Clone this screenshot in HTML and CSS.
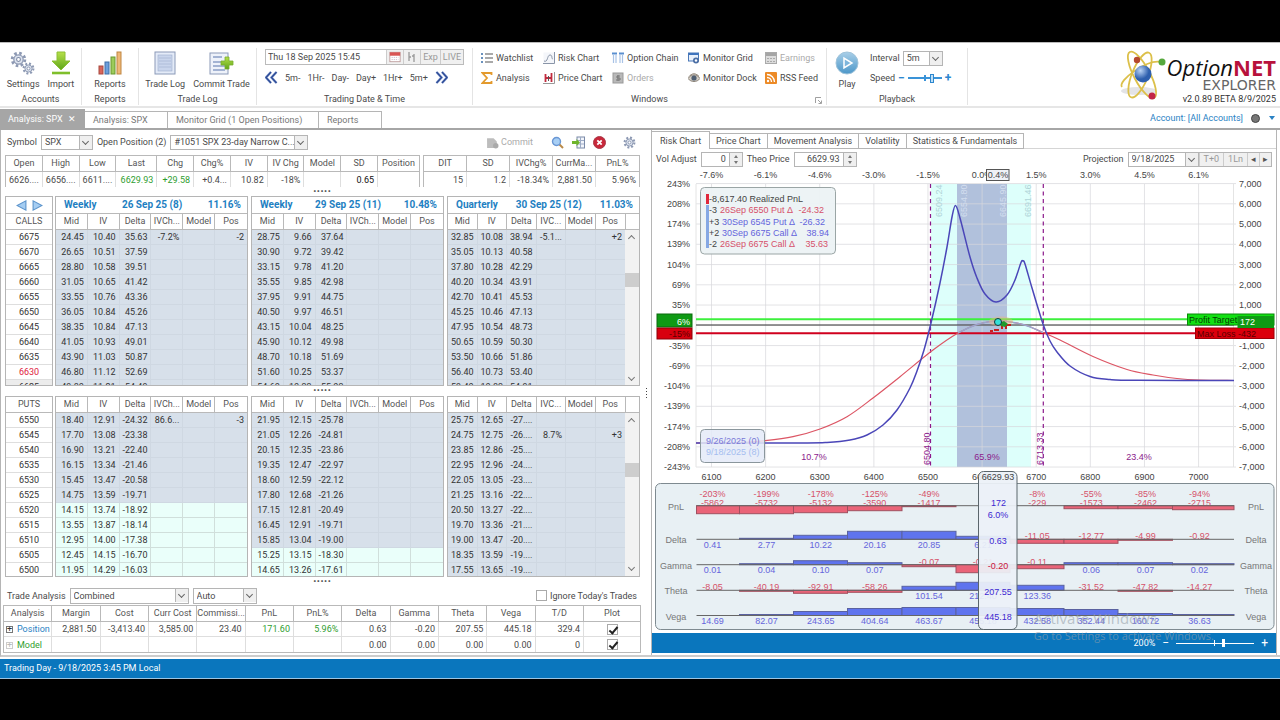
FILE: index.html
```html
<!DOCTYPE html>
<html lang="en">
<head>
  <meta charset="UTF-8">
  <title>OptionNET Explorer - Analysis: SPX</title>
  <link rel="stylesheet" href="styles.css">
</head>
<body>
  <!-- Icon sprite -->
  <svg class="sprite" width="0" height="0">
    <defs>
      <radialGradient id="ball" cx="35%" cy="30%"><stop offset="0" stop-color="#b9d3f5"/><stop offset="1" stop-color="#2d5fae"/></radialGradient>
      <linearGradient id="playFill" x1="0" y1="0" x2="0" y2="1"><stop offset="0" stop-color="#a9cfe8"/><stop offset="1" stop-color="#4c97c9"/></linearGradient>
      <linearGradient id="greenFill" x1="0" y1="0" x2="0" y2="1"><stop offset="0" stop-color="#b6e04a"/><stop offset="1" stop-color="#5ea51a"/></linearGradient>
    </defs>
    <symbol id="gear" viewBox="0 0 16 16">
      <circle cx="8" cy="8" r="6" fill="none" stroke="#8d99b3" stroke-width="2.6" stroke-dasharray="2.4 2.3"/>
      <circle cx="8" cy="8" r="4.4" fill="#dde3ee" stroke="#8d99b3" stroke-width="1.2"/>
      <circle cx="8" cy="8" r="1.8" fill="#fff" stroke="#7d8aa6"/>
    </symbol>
    <symbol id="import" viewBox="0 0 24 24">
      <path d="M8 1h8v9h5l-9 9-9-9h5z" fill="url(#greenFill)" stroke="#8cbf35"/>
      <path d="M3 22h18" stroke="#7fbf2b" stroke-width="2.6"/>
    </symbol>
    <symbol id="bars" viewBox="0 0 24 24">
      <rect x="1" y="15" width="4" height="8" fill="#d9655b" stroke="#a8483f"/>
      <rect x="7" y="11" width="4" height="12" fill="#6d9fdc" stroke="#3f6ea8"/>
      <rect x="13" y="6" width="4" height="17" fill="#9ccb5a" stroke="#6a9a31"/>
      <rect x="19" y="1" width="4" height="22" fill="#efb876" stroke="#bf8642"/>
    </symbol>
    <symbol id="log" viewBox="0 0 24 24">
      <rect x="2" y="1" width="20" height="22" fill="#e4ebf8" stroke="#8b9ab8"/>
      <rect x="5" y="4" width="14" height="16" fill="#c9d5ec" stroke="#9dadcc" stroke-width=".6"/>
      <path d="M6 7h12M6 10h12M6 13h12M6 16h12" stroke="#a9b8d6" stroke-width=".8"/>
    </symbol>
    <symbol id="commit" viewBox="0 0 26 24">
      <rect x="2" y="2" width="18" height="21" fill="#eef2fa" stroke="#8b9ab8"/>
      <path d="M5 6h9M5 11h9M5 15h12M5 19h12" stroke="#a3b3d3" stroke-width="2"/>
      <path d="M17 6h4v4h4v4h-4v4h-4v-4h-4v-4h4z" fill="url(#greenFill)" stroke="#7aad2d" stroke-width=".8"/>
    </symbol>
    <symbol id="calendar" viewBox="0 0 14 14">
      <rect x="1" y="1.500" width="12" height="11" fill="#fff" stroke="#b99"/>
      <rect x="1" y="1.500" width="12" height="4" fill="#d95454"/>
      <path d="M3 7.500h8M3 10h8" stroke="#c9b7c9" stroke-dasharray="1.500 1"/>
    </symbol>
    <symbol id="candles" viewBox="0 0 12 12"><path d="M3 1v9M3 6h2M8 3v8M6 5h2" stroke="#999" stroke-width="1.300" fill="none"/></symbol>
    <symbol id="back" viewBox="0 0 13 13">
      <path d="M6 1 1 6.500 6 12M11.500 1l-5 5.500 5 5.500" fill="none" stroke="#8aa0d4" stroke-width="2.600"/>
      <path d="M6 1 1 6.500 6 12M11.500 1l-5 5.500 5 5.500" fill="none" stroke="#2c4a94" stroke-width="1.300"/>
    </symbol>
    <symbol id="list" viewBox="0 0 12 12"><path d="M4 2h8M4 6h8M4 10h8" stroke="#555" stroke-width="1.200"/><path d="M0 2h2M0 6h2M0 10h2" stroke="#3a6ea8" stroke-width="1.600"/></symbol>
    <symbol id="sigma" viewBox="0 0 12 12"><path d="M10.500 3V1H1.500l4.500 5-4.500 5h9V9" fill="none" stroke="#e39a2d" stroke-width="1.800"/></symbol>
    <symbol id="curve" viewBox="0 0 12 12"><rect x=".5" y=".5" width="11" height="11" fill="#f4f6fa"/><path d="M1 9c4 2 3-6 6-6s1 4 3 4M11.500 0v11.500H0" fill="none" stroke="#8a95a8"/></symbol>
    <symbol id="price" viewBox="0 0 12 12"><path d="M11.500 0v11.500H0" stroke="#999" fill="none"/><path d="M2.500 2v8M8.500 1v9M3 6h5" stroke="#c22b3e" stroke-width="1.800"/><path d="M5.500 4v5" stroke="#555"/></symbol>
    <symbol id="chain" viewBox="0 0 12 12"><path d="M0 1.500h5M7 1.500h5" stroke="#5a8fd0" stroke-width="2"/><path d="M1.500 3v8M4 3v8M8 3v8M10.500 3v8" stroke="#a9c3e6" stroke-width="1.200"/></symbol>
    <symbol id="orders" viewBox="0 0 12 12"><rect x="1" y="1" width="10" height="10" fill="#b9b9b9" stroke="#999"/><path d="M8 4H5v2h3v2H4M6 3v6" stroke="#777" fill="none"/></symbol>
    <symbol id="mgrid" viewBox="0 0 12 12"><rect x=".5" y="1" width="10" height="8" fill="#e8f0fb" stroke="#4a78b8"/><path d="M.5 2h10" stroke="#3f74bd" stroke-width="2"/><circle cx="8" cy="8.500" r="3" fill="#4c6fa5"/><circle cx="8" cy="8.500" r="1.200" fill="#fff"/></symbol>
    <symbol id="eye" viewBox="0 0 12 12"><path d="M0 6.500C3 2 9 2 12 6.500 9 10.500 3 10.500 0 6.500z" fill="#d5cfc6" stroke="#8b8379"/><circle cx="6" cy="6" r="2.600" fill="#4f5f72"/><path d="M1 4.500C4 1 8 1 11 4.500" fill="none" stroke="#7a6d5c"/></symbol>
    <symbol id="earn" viewBox="0 0 12 12"><rect x=".5" y=".5" width="11" height="11" fill="#dcdcdc" stroke="#aaa"/><path d="M1 2.500h10" stroke="#a5a5a5" stroke-width="3"/><path d="M2 6.500h8M2 9.500h8" stroke="#aaa" stroke-dasharray="2 1"/></symbol>
    <symbol id="rss" viewBox="0 0 12 12"><rect width="12" height="12" rx="1" fill="#ec8a26"/><circle cx="3" cy="9" r="1.200" fill="#fff"/><path d="M2 5.500a4.500 4.500 0 0 1 4.500 4.500M2 2.500A7.500 7.500 0 0 1 9.500 10" stroke="#fff" stroke-width="1.300" fill="none"/></symbol>
    <symbol id="play" viewBox="0 0 24 24"><circle cx="12" cy="12" r="11" fill="url(#playFill)" stroke="#9fc3da"/><path d="M9 7v10l8-5z" fill="#7db6dc" stroke="#fff" stroke-width="1.500"/></symbol>
    <symbol id="tray" viewBox="0 0 12 12"><path d="M1 2h6l3 3v6H1z" fill="#bdbdbd"/><circle cx="9" cy="9" r="2.500" fill="#aaa"/></symbol>
    <symbol id="find" viewBox="0 0 13 13"><path d="m8 8 4 4" stroke="#b98a4a" stroke-width="2"/><circle cx="5.500" cy="5.500" r="4" fill="#a8cff5" stroke="#6a97d4" stroke-width="1.400"/></symbol>
    <symbol id="export" viewBox="0 0 13 13"><rect x="5" y="1" width="7.500" height="11" fill="#f2f5fb" stroke="#7b8aa8"/><path d="M5 4.500h7M5 8h7M8.500 1v11" stroke="#9dabc6"/><path d="M4.500 3v2H0v3h4.500v2L8 6.500z" fill="#6fb52c"/></symbol>
    <symbol id="close" viewBox="0 0 13 13"><circle cx="6.500" cy="6.500" r="6" fill="#c8273a" stroke="#a83a48"/><path d="m4.300 4.300 4.400 4.400m0-4.400L4.300 8.700" stroke="#fff" stroke-width="1.800"/></symbol>
    <symbol id="tri" viewBox="0 0 10 10"><path d="M9 .8v8.400L1 5z" fill="#a5cdf2" stroke="#5b93cb"/></symbol>
  </svg>

  <div class="app">
    <!-- Ribbon -->
    <header class="ribbon">
      <section class="group accounts">
        <div class="group-body">
          <button class="big"><span class="gears"><svg><use href="#gear"/></svg><svg class="small-gear"><use href="#gear"/></svg></span>Settings</button>
          <button class="big"><svg><use href="#import"/></svg>Import</button>
        </div>
        <h2>Accounts</h2>
      </section>
      <section class="group reports">
        <div class="group-body"><button class="big"><svg><use href="#bars"/></svg>Reports</button></div>
        <h2>Reports</h2>
      </section>
      <section class="group tradelog">
        <div class="group-body">
          <button class="big"><svg><use href="#log"/></svg>Trade Log</button>
          <button class="big"><svg><use href="#commit"/></svg>Commit Trade</button>
        </div>
        <h2>Trade Log</h2>
      </section>
      <section class="group datetime">
        <div class="group-body stack">
          <div class="date-row">
            <input type="text" aria-label="Trading date" value="Thu 18 Sep 2025 15:45">
            <button aria-label="Calendar"><svg><use href="#calendar"/></svg></button>
            <button aria-label="Candles"><svg><use href="#candles"/></svg></button>
            <button>Exp</button>
            <button>LIVE</button>
          </div>
          <div class="step-row">
            <button aria-label="Back"><svg><use href="#back"/></svg></button>
            <button>5m-</button><button>1Hr-</button><button>Day-</button>
            <button>Day+</button><button>1Hr+</button><button>5m+</button>
            <button aria-label="Forward"><svg class="flip"><use href="#back"/></svg></button>
          </div>
        </div>
        <h2>Trading Date &amp; Time</h2>
      </section>
      <section class="group windows">
        <div class="group-body window-grid">
          <button><svg><use href="#list"/></svg>Watchlist</button>
          <button><svg><use href="#curve"/></svg>Risk Chart</button>
          <button><svg><use href="#chain"/></svg>Option Chain</button>
          <button><svg><use href="#mgrid"/></svg>Monitor Grid</button>
          <button class="off"><svg><use href="#earn"/></svg>Earnings</button>
          <button><svg><use href="#sigma"/></svg>Analysis</button>
          <button><svg><use href="#price"/></svg>Price Chart</button>
          <button class="off"><svg><use href="#orders"/></svg>Orders</button>
          <button><svg><use href="#eye"/></svg>Monitor Dock</button>
          <button><svg><use href="#rss"/></svg>RSS Feed</button>
        </div>
        <h2>Windows</h2>
        <svg class="launcher" viewBox="0 0 7 7"><path d="M.5 6V.5H6M3 3l3 3M6.500 3.500v3h-3" fill="none" stroke="#888" stroke-width=".8"/></svg>
      </section>
      <section class="group playback">
        <div class="group-body">
          <button class="big"><svg><use href="#play"/></svg>Play</button>
          <div class="play-opts">
            <div class="play-row">
              <label for="interval">Interval</label>
              <span class="combo interval"><select id="interval"><option>5m</option></select></span>
            </div>
            <div class="play-row">
              <label for="speed">Speed</label>
              <span class="blue-sign">&#8722;</span>
              <input id="speed" class="speed" type="range" min="0" max="100" value="75">
              <span class="blue-sign">+</span>
            </div>
          </div>
        </div>
        <h2>Playback</h2>
      </section>
      <div class="brand">
        <svg class="atom" viewBox="0 0 48 54">
          <ellipse cx="20" cy="42" rx="18" ry="4" fill="#e3e3e6"/>
          <g fill="none" stroke="#dcc04a" stroke-width="1.800">
            <ellipse cx="23" cy="26" rx="8" ry="26" transform="rotate(-28 23 26)"/>
            <ellipse cx="21" cy="26" rx="8" ry="24" transform="rotate(22 21 26)"/>
            <path d="M3 38C-2 32 28 10 42 13"/>
          </g>
          <circle cx="24" cy="25" r="8.500" fill="url(#ball)"/>
          <circle cx="18" cy="11" r="3.200" fill="#b5482f"/>
          <circle cx="43" cy="13" r="3.500" fill="#55a83c"/>
          <circle cx="33" cy="47" r="3.500" fill="#c22448"/>
        </svg>
        <div class="brand-text">
          <div class="brand-name"><i>Option</i><b>NET</b></div>
          <div class="brand-sub">EXPLORER</div>
          <div class="version">v2.0.89 BETA 8/9/2025</div>
        </div>
      </div>
    </header>

    <!-- Document tabs -->
    <nav class="doc-tabs">
      <button class="doc-tab active">Analysis: SPX <span class="tab-x">&#10005;</span></button>
      <button class="doc-tab">Analysis: SPX</button>
      <button class="doc-tab monitor">Monitor Grid (1 Open Positions)</button>
      <button class="doc-tab last">Reports</button>
      <a class="account" href="#">Account: [All Accounts]</a>
      <span class="account-dot"></span>
      <span class="account-arrow"></span>
    </nav>

    <main class="main">
      <!-- Left: option chain -->
      <div class="left">
        <div class="bar">
          <label for="symbol">Symbol</label>
          <span class="combo symbol"><select id="symbol"><option>SPX</option></select></span>
          <label for="position">Open Position (2)</label>
          <span class="combo position"><select id="position"><option>#1051 SPX 23-day Narrow C...</option></select></span>
          <button class="tool off push"><svg><use href="#tray"/></svg>Commit</button>
          <button class="tool zoomer" aria-label="Find"><svg><use href="#find"/></svg></button>
          <button class="tool" aria-label="Export"><svg><use href="#export"/></svg></button>
          <button class="tool" aria-label="Close position"><svg><use href="#close"/></svg></button>
          <button class="tool options" aria-label="Options"><svg><use href="#gear"/></svg></button>
        </div>

        <div class="quotes">
          <table class="grid quote">
            <thead><tr><th>Open</th><th>High</th><th>Low</th><th class="wide">Last</th><th>Chg</th><th>Chg%</th><th>IV</th><th>IV Chg</th><th>Model</th><th>SD</th><th class="wide">Position</th></tr></thead>
            <tbody><tr><td>6626....</td><td>6656....</td><td>6611....</td><td class="up">6629.93</td><td class="up">+29.58</td><td>+0.4...</td><td>10.82</td><td>-18%</td><td></td><td class="dark">0.65</td><td></td></tr></tbody>
          </table>
          <table class="grid position-quote">
            <thead><tr><th>DIT</th><th>SD</th><th>IVChg%</th><th>CurrMa...</th><th>PnL%</th></tr></thead>
            <tbody><tr><td>15</td><td>1.2</td><td>-18.34%</td><td>2,881.50</td><td>5.96%</td></tr></tbody>
          </table>
        </div>
        <div class="splitter">&middot;&middot;&middot;&middot;&middot;</div>

        <div class="chain calls" id="calls"></div>
        <div class="splitter">&middot;&middot;&middot;&middot;&middot;</div>
        <div class="chain puts" id="puts"></div>
        <div class="splitter">&middot;&middot;&middot;&middot;&middot;</div>

        <div class="bar trade-bar">
          <label for="mode">Trade Analysis</label>
          <span class="combo mode"><select id="mode"><option>Combined</option></select></span>
          <span class="combo auto"><select aria-label="Refresh"><option>Auto</option></select></span>
          <label class="push check-label"><input type="checkbox"> Ignore Today's Trades</label>
        </div>
        <table class="grid analysis">
          <thead><tr><th>Analysis</th><th>Margin</th><th>Cost</th><th>Curr Cost</th><th>Commissi...</th><th>PnL</th><th>PnL%</th><th>Delta</th><th>Gamma</th><th>Theta</th><th>Vega</th><th>T/D</th><th class="plot">Plot</th></tr></thead>
          <tbody>
            <tr><td class="name pos"><i>+</i>Position</td><td>2,881.50</td><td>-3,413.40</td><td>3,585.00</td><td>23.40</td><td class="up">171.60</td><td class="up">5.96%</td><td>0.63</td><td>-0.20</td><td>207.55</td><td>445.18</td><td>329.4</td><td class="plot"><input type="checkbox" aria-label="Plot position" checked></td></tr>
            <tr><td class="name model"><i>+</i>Model</td><td></td><td></td><td></td><td></td><td></td><td></td><td>0.00</td><td>0.00</td><td>0.00</td><td>0.00</td><td>0</td><td class="plot"><input type="checkbox" aria-label="Plot model" checked></td></tr>
          </tbody>
        </table>
      </div>

      <div class="v-splitter"><span></span><span></span><span></span><span></span></div>

      <!-- Right: risk chart -->
      <div class="right">
        <nav class="chart-tabs">
          <button class="active">Risk Chart</button>
          <button>Price Chart</button>
          <button>Movement Analysis</button>
          <button>Volatility</button>
          <button>Statistics &amp; Fundamentals</button>
        </nav>
        <div class="chart-bar">
          <label for="vol">Vol Adjust</label>
          <span class="spin vol"><input id="vol" type="text" value="0"><span class="arrows"></span></span>
          <label for="theo">Theo Price</label>
          <span class="spin theo"><input id="theo" type="text" value="6629.93"><span class="arrows"></span></span>
          <label class="push" for="proj">Projection</label>
          <span class="combo proj"><select id="proj"><option>9/18/2025</option></select></span>
          <span class="proj-buttons"><button>T+0</button><button>1Ln</button><button aria-label="Previous">&#9666;</button><button aria-label="Next">&#9656;</button></span>
        </div>
        <svg class="risk" id="risk" viewBox="652 168 624 465"></svg>
        <div class="zoom-bar">
          <label for="zoom">200%</label>
          <span>&#8722;</span>
          <input id="zoom" type="range" min="0" max="100" value="61">
          <span>+</span>
        </div>
        <div class="watermark">
          <div class="big-mark">Activate Windows</div>
          <div>Go to Settings to activate Windows.</div>
        </div>
      </div>
    </main>

    <footer class="status">Trading Day - 9/18/2025 3:45 PM Local</footer>
  </div>

  <script src="app.js"></script>
</body>
</html>
```
FILE: styles.css
```css
* {
  box-sizing: border-box;
}

body {
  margin: 0;
  padding: 42px 0 0;
  background: #000;
  color: #4a4a4a;
  font-family: Roboto, "Liberation Sans", sans-serif;
  font-size: 9px;
  line-height: 12px;
}

button, input, select {
  font: inherit;
  color: inherit;
  margin: 0;
  padding: 0;
}

button {
  background: none;
  border: none;
  white-space: nowrap;
}

.sprite {
  position: absolute;
}

.app {
  background: #fff;
  border-top: 1px solid #bbb;
  border-bottom: 1px solid #9cc4e2;
}

.off, button.off {
  color: #aaa;
}

.push {
  margin-left: auto;
}

/* Ribbon */
.ribbon {
  display: flex;
  padding-top: 5px;
  height: 65px;
  border-bottom: 2px solid #e6e6e6;
}

.group {
  position: relative;
  display: flex;
  flex-direction: column;
  flex-shrink: 0;
  height: 57px;
  border-right: 1px solid #e4e4e4;
}

.group h2 {
  margin: 0;
  font-size: 9px;
  font-weight: normal;
  line-height: 12px;
  text-align: center;
}

.group-body {
  display: flex;
  justify-content: center;
  height: 47px;
}

.accounts { width: 82px; }
.reports { width: 57px; }
.tradelog { width: 118px; }
.datetime { width: 216px; }
.windows { width: 354px; }
.playback { width: 141px; }

.big {
  display: flex;
  flex-direction: column;
  align-items: center;
  gap: 3px;
  padding: 3px 4px 0;
}

.big > svg, .gears {
  width: 26px;
  height: 24px;
}

.gears {
  position: relative;
}

.gears svg {
  position: absolute;
  left: 0;
  top: 0;
  width: 17px;
  height: 17px;
}

.gears .small-gear {
  left: 12px;
  top: 11px;
  width: 13px;
  height: 13px;
}

.stack {
  flex-direction: column;
  justify-content: flex-start;
  padding: 1px 8px 0;
  gap: 6px;
}

.date-row {
  display: flex;
  height: 16px;
  border: 1px solid #bbb;
}

.date-row input {
  flex: 1;
  min-width: 0;
  border: none;
  padding-left: 2px;
}

.date-row button {
  display: flex;
  align-items: center;
  padding: 0 2px;
  border-left: 1px solid #ccc;
  background: #f0f0f0;
  color: #999;
}

.date-row svg {
  width: 12px;
  height: 12px;
}

.step-row {
  display: flex;
  align-items: center;
  gap: 7px;
}

.step-row svg {
  display: block;
  width: 13px;
  height: 13px;
}

.flip {
  transform: scaleX(-1);
}

.window-grid {
  display: grid;
  grid-template-columns: 62px 69px 76px 77px 60px;
  grid-template-rows: 20px 20px;
  justify-content: start;
  padding-left: 8px;
}

.window-grid button {
  display: flex;
  align-items: center;
  gap: 3px;
}

.window-grid svg {
  width: 12px;
  height: 12px;
}

.launcher {
  position: absolute;
  right: 4px;
  bottom: 1px;
  width: 7px;
  height: 7px;
}

.playback .group-body {
  justify-content: flex-start;
  padding-left: 3px;
}

.play-opts {
  padding-left: 6px;
}

.play-row {
  display: flex;
  align-items: center;
  gap: 3px;
  height: 20px;
}

.blue-sign {
  color: #2d87cf;
  font-size: 12px;
  font-weight: bold;
}

input[type="range"] {
  appearance: none;
  height: 10px;
  background: linear-gradient(#3a93d8, #3a93d8) center / 100% 2px no-repeat;
}

input[type="range"]::-webkit-slider-thumb {
  appearance: none;
  width: 4px;
  height: 9px;
  background: #bfe0f7;
  border: 1px solid #2d87cf;
}

input.speed {
  width: 34px;
  background:
    linear-gradient(#3a93d8, #3a93d8) 16px center / 2px 6px no-repeat,
    linear-gradient(#3a93d8, #3a93d8) center / 100% 2px no-repeat;
}

/* Brand */
.brand {
  display: flex;
  margin-left: auto;
  padding-right: 4px;
}

.atom {
  width: 48px;
  height: 54px;
  margin-top: 1px;
}

.brand-text {
  text-align: right;
  color: #333;
}

.brand-name {
  font-family: "Open Sans", "Noto Sans", sans-serif;
  font-size: 22px;
  line-height: 24px;
  padding-top: 7px;
  color: #111;
}

.brand-name b {
  color: #b8123c;
}

.brand-sub {
  font-family: "DejaVu Sans", sans-serif;
  font-size: 14px;
  line-height: 12px;
  color: #666;
}

.version {
  line-height: 16px;
}

/* Document tabs */
.doc-tabs {
  display: flex;
  align-items: flex-end;
  height: 22px;
  border-bottom: 2px solid #a6a6a6;
  color: #777;
}

.doc-tab {
  width: 83px;
  height: 17px;
  padding: 0 8px;
  border: 1px solid #b5b5b5;
  border-width: 1px 1px 0 0;
  line-height: 14px;
  text-align: left;
}

.doc-tab.active {
  display: flex;
  justify-content: space-between;
  align-items: center;
  width: 85px;
  height: 19px;
  background: #a6a6a6;
  border-color: #a6a6a6;
  color: #fff;
}

.doc-tab.monitor {
  width: 151px;
}

.doc-tab.last {
  width: 63px;
}

.account {
  margin-left: auto;
  padding-bottom: 4px;
  color: #2a82c4;
  text-decoration: none;
}

.account-dot {
  width: 9px;
  height: 9px;
  margin: 0 9px 5px 8px;
  border: 1px solid #444;
  border-radius: 50%;
  background: #777;
}

.account-arrow {
  margin: 0 5px 8px 0;
  border: 3px solid transparent;
  border-top: 4px solid #2a82c4;
  border-bottom: none;
}

/* Main */
.main {
  display: grid;
  grid-template-columns: 638fr 10px 626fr;
  padding: 0 3px 0 2px;
  border-left: 1px solid #b5b5b5;
  border-bottom: 2px solid #ccc;
}

.left {
  min-width: 0;
  padding-bottom: 2px;
}

.bar {
  display: flex;
  align-items: center;
  gap: 4px;
  height: 24px;
  padding: 0 4px;
}

.combo {
  position: relative;
  display: inline-flex;
  height: 15px;
  border: 1px solid #b5b5b5;
}

.combo select {
  flex: 1;
  min-width: 0;
  appearance: none;
  border: none;
  border-radius: 0;
  background: #fff;
  padding: 0 3px;
}

.combo::before {
  content: "";
  position: absolute;
  right: 0;
  top: 0;
  width: 12px;
  height: 13px;
  border-left: 1px solid #b5b5b5;
  background: #efefef;
  pointer-events: none;
}

.combo::after {
  content: "";
  position: absolute;
  right: 4px;
  top: 3px;
  width: 4px;
  height: 4px;
  border: solid #666;
  border-width: 0 1px 1px 0;
  transform: rotate(45deg);
  pointer-events: none;
}

.combo.interval { width: 40px; }
.combo.symbol { width: 52px; }
.combo.position { width: 138px; }
.combo.mode { width: 119px; }
.combo.auto { width: 64px; }
.combo.proj { width: 71px; }

.tool {
  display: flex;
  align-items: center;
  gap: 2px;
  margin-left: 4px;
}

.tool.push {
  margin-left: auto;
}

.tool svg {
  width: 13px;
  height: 13px;
}

.tool.zoomer {
  margin-left: 14px;
}

.tool.options {
  margin: 0 1px 0 13px;
}

/* Grids */
.grid {
  width: 100%;
  border-collapse: separate;
  border-spacing: 0;
  table-layout: fixed;
}

.grid th {
  height: 16px;
  padding: 0;
  border: 1px solid #b9b9b9;
  border-width: 0 1px 1px 0;
  color: #555;
  font-weight: normal;
  line-height: 15px;
  text-align: center;
  white-space: nowrap;
  overflow: hidden;
}

.grid td {
  height: 15px;
  padding: 0 3px 0 0;
  border: 1px solid #dedede;
  border-width: 0 1px 1px 0;
  line-height: 14px;
  text-align: right;
  white-space: nowrap;
  overflow: hidden;
}

.grid th:last-child, .grid td:last-child {
  border-right: none;
}

.up {
  color: #2f9e2f;
}

.dark {
  color: #111;
}

.quotes {
  display: flex;
  gap: 3px;
  height: 33px;
  padding: 1px 1px 0 2px;
}

.quote, .position-quote {
  border: 1px solid #b9b9b9;
  border-bottom: none;
}

.quotes .grid td {
  border-bottom: none;
}

.quotes .wide {
  width: 41px;
}

.quote {
  flex: 415;
}

.position-quote {
  flex: 216;
}

.splitter {
  height: 9px;
  color: #555;
  font-size: 12px;
  font-weight: bold;
  line-height: 10px;
  text-align: center;
}

.chain {
  display: flex;
  gap: 3px;
  padding: 0 1px 0 2px;
}

.calls { height: 190px; }
.puts { height: 181px; margin-top: 1px; }

.expiry {
  flex: 1;
  min-width: 0;
  overflow: hidden;
  border: 1px solid #b5b5b5;
  color: #333;
}

.expiry.strikes {
  flex: 0 0 48px;
  margin-right: -1px;
}

.strikes td {
  text-align: center;
  padding: 0;
}

.strikes .at-money {
  color: #e0203c;
}

.strikes .beyond {
  background: #ececec;
}

.expiry-title {
  display: flex;
  justify-content: space-between;
  align-items: center;
  height: 17px;
  padding: 0 6px 0 8px;
  border-bottom: 1px solid #b9b9b9;
  color: #1e7fc2;
  font-size: 10px;
  font-weight: bold;
}

.strikes .expiry-title {
  justify-content: center;
  gap: 5px;
  padding: 0;
}

.expiry-title svg {
  width: 11px;
  height: 11px;
}

.expiry-body {
  display: flex;
}

.grid .near td {
  background: #d7e0ea;
  border-color: #cfd8e2;
}

.grid .far td {
  background: #eafffa;
  border-color: #d0dfdb;
}

.scroll {
  flex: 0 0 14px;
  display: flex;
  flex-direction: column;
  background: #f2f2f2;
}

.scroll-head {
  height: 16px;
  border: 1px solid #b9b9b9;
  border-width: 0 0 1px 1px;
  background: #fff;
}

.scroll .chev {
  width: 5px;
  height: 5px;
  margin: 6px 4px 3px;
  border: solid #777;
  border-width: 1px 0 0 1px;
  transform: rotate(45deg);
}

.scroll .chev.down {
  margin: 0 4px 6px;
  transform: rotate(225deg);
}

.thumb {
  height: 14px;
  margin: 29px 0 auto;
  background: #cdcdcd;
}

.puts .thumb {
  margin-top: 36px;
}

.calls .expiry-body { height: 172px; }
.puts .expiry-body { height: 179px; }

.trade-bar {
  height: 19px;
}

.trade-bar .combo {
  height: 16px;
}

.check-label {
  display: flex;
  align-items: center;
  gap: 3px;
}

input[type="checkbox"] {
  appearance: none;
  position: relative;
  width: 11px;
  height: 11px;
  border: 1px solid #aaa;
  background: #fff;
}

input[type="checkbox"]:checked::after {
  content: "";
  position: absolute;
  left: 3px;
  top: 0;
  width: 3px;
  height: 7px;
  border: solid #222;
  border-width: 0 2px 2px 0;
  transform: rotate(40deg);
}

.analysis {
  border: 1px solid #b9b9b9;
}

.analysis tbody tr:last-child td {
  border-bottom: none;
}

.analysis .plot {
  width: 56px;
  padding: 0;
  text-align: center;
}

.analysis .plot input {
  display: block;
  margin: 0 auto;
}

.analysis .name {
  text-align: left;
  padding: 0 0 0 2px;
}

.name i {
  display: inline-block;
  width: 7px;
  height: 7px;
  margin-right: 4px;
  border: 1px solid #777;
  font-style: normal;
  line-height: 5px;
  text-align: center;
}

.name.pos { color: #2a82c4; }
.name.model { color: #2f9e2f; }
.name.pos i { color: #333; }
.name.model i { color: #bbb; border-color: #ccc; }

.v-splitter {
  display: flex;
  flex-direction: column;
  align-items: center;
  justify-content: center;
  gap: 2px;
}

.v-splitter span {
  width: 1px;
  height: 1px;
  background: #444;
}

/* Risk chart */
.right {
  position: relative;
  min-width: 0;
  border: 1px solid #b5b5b5;
  border-width: 0 1px;
}

.chart-tabs {
  display: flex;
  align-items: flex-end;
  height: 19px;
  padding-top: 1px;
}

.chart-tabs button {
  height: 16px;
  padding: 0 6px;
  border: 1px solid #b5b5b5;
  border-left: none;
}

.chart-tabs button.active {
  height: 18px;
  padding: 0 8px;
  border-bottom: none;
}

.chart-tabs::after {
  content: "";
  flex: 1;
  border-bottom: 1px solid #d5d5d5;
}

.chart-bar {
  display: flex;
  align-items: center;
  gap: 4px;
  height: 19px;
  padding: 1px 4px 0;
}

.spin {
  display: inline-flex;
  height: 15px;
  border: 1px solid #b5b5b5;
}

.spin input {
  flex: 1;
  min-width: 0;
  border: none;
  padding-right: 3px;
  text-align: right;
}

.spin.vol { width: 42px; }
.spin.theo { width: 63px; }

.arrows {
  display: flex;
  flex-direction: column;
  justify-content: center;
  align-items: center;
  gap: 3px;
  width: 13px;
  border-left: 1px solid #b5b5b5;
  background: #efefef;
}

.arrows::before, .arrows::after {
  content: "";
  border: 2px solid transparent;
  border-top: none;
  border-bottom: 3px solid #777;
}

.arrows::after {
  transform: rotate(180deg);
}

.proj-buttons {
  display: flex;
  height: 15px;
  margin-left: -4px;
  border: 1px solid #b5b5b5;
  border-left: none;
  background: #f0f0f0;
}

.proj-buttons button {
  padding: 0 4px;
  border-left: 1px solid #ccc;
  color: #999;
}

.proj-buttons button:nth-child(n+3) {
  width: 12px;
  padding: 0;
  color: #555;
}

.risk {
  display: block;
  width: 100%;
  font-family: "Liberation Sans", Arial, sans-serif;
  font-size: 9px;
}

.risk text {
  fill: #444;
}

.risk .mid { text-anchor: middle; }
.risk .end { text-anchor: end; }
.risk .neg { fill: #d6506a; }
.risk .pos { fill: #6464dc; }
.risk .greek { fill: #777; }
.risk .prob { fill: #8b1a8b; }
.risk .sd { fill: #b0d4d8; }
.risk .sd-in { fill: #d3deef; }
.risk .white { fill: #fff; }
.risk .now { fill: #3c28d2; }
.risk .now-neg { fill: #c8143c; }
.risk .maxloss { fill: #5a0000; }
.risk .target { fill: #033c03; }
.risk .date-a { fill: #7a78d8; }
.risk .date-b { fill: #a5bdf0; }

.zoom-bar {
  display: flex;
  align-items: center;
  justify-content: flex-end;
  gap: 7px;
  height: 20px;
  padding-right: 8px;
  background: #0a76bd;
  color: #fff;
}

.zoom-bar span {
  font-size: 12px;
}

.zoom-bar input {
  width: 78px;
  background:
    linear-gradient(#fff, #fff) 38px center / 1px 6px no-repeat,
    linear-gradient(#fff, #fff) center / 100% 1px no-repeat;
}

.zoom-bar input::-webkit-slider-thumb {
  width: 3px;
  height: 8px;
  background: #fff;
  border: none;
}

/* Overlay text above the chart corner */
.watermark {
  position: absolute;
  right: 62px;
  bottom: 12px;
  color: rgba(150, 160, 170, 0.6);
  font-family: "Open Sans", sans-serif;
  font-size: 11px;
  line-height: 15px;
  pointer-events: none;
}

.big-mark {
  font-size: 15px;
  line-height: 20px;
}

.status {
  height: 19px;
  margin-top: 2px;
  padding-left: 4px;
  background: #0a76bd;
  color: #fff;
  line-height: 18px;
}
```
FILE: app.js
```js
// Rows are "mid iv delta ivchg model pos", "_" is an empty cell
const strikesCalls = [6675, 6670, 6665, 6660, 6655, 6650, 6645, 6640, 6635, 6630, 6625];
const strikesPuts = [6550, 6545, 6540, 6535, 6530, 6525, 6520, 6515, 6510, 6505, 6500];

const calls = [
  { type: "Weekly", date: "26 Sep 25 (8)", iv: "11.16%", near: 11, rows: [
    "24.45 10.40 35.63 -7.2% _ -2", "26.65 10.51 37.59", "28.80 10.58 39.51", "31.05 10.65 41.42",
    "33.55 10.76 43.36", "36.05 10.84 45.26", "38.35 10.84 47.13", "41.05 10.93 49.01",
    "43.90 11.03 50.87", "46.80 11.12 52.69", "49.80 11.21 54.49"] },
  { type: "Weekly", date: "29 Sep 25 (11)", iv: "10.48%", near: 11, rows: [
    "28.75 9.66 37.64", "30.90 9.72 39.42", "33.15 9.78 41.20", "35.55 9.85 42.98",
    "37.95 9.91 44.75", "40.50 9.97 46.51", "43.15 10.04 48.25", "45.90 10.12 49.98",
    "48.70 10.18 51.69", "51.60 10.25 53.37", "54.60 10.33 55.03"] },
  { type: "Quarterly", date: "30 Sep 25 (12)", iv: "11.03%", near: 11, scroll: true, rows: [
    "32.85 10.08 38.94 -5.1... _ +2", "35.05 10.13 40.58", "37.80 10.28 42.29", "40.20 10.34 43.91",
    "42.70 10.41 45.53", "45.25 10.46 47.13", "47.95 10.54 48.73", "50.65 10.59 50.30",
    "53.50 10.66 51.86", "56.40 10.73 53.40", "59.40 10.83 54.91"] }
];

const puts = [
  { near: 6, rows: [
    "18.40 12.91 -24.32 86.6... _ -3", "17.70 13.08 -23.38", "16.90 13.21 -22.40", "16.15 13.34 -21.46",
    "15.45 13.47 -20.58", "14.75 13.59 -19.71", "14.15 13.74 -18.92", "13.55 13.87 -18.14",
    "12.95 14.00 -17.38", "12.45 14.15 -16.70", "11.95 14.29 -16.03"] },
  { near: 9, rows: [
    "21.95 12.15 -25.78", "21.05 12.26 -24.81", "20.15 12.35 -23.86", "19.35 12.47 -22.97",
    "18.60 12.59 -22.12", "17.80 12.68 -21.26", "17.15 12.81 -20.49", "16.45 12.91 -19.71",
    "15.85 13.04 -19.00", "15.25 13.15 -18.30", "14.65 13.26 -17.61"] },
  { near: 11, scroll: true, rows: [
    "25.75 12.65 -27....", "24.75 12.75 -26.... 8.7% _ +3", "23.85 12.86 -25....", "22.95 12.96 -24....",
    "22.05 13.05 -23....", "21.25 13.16 -22....", "20.50 13.27 -22....", "19.70 13.36 -21....",
    "19.00 13.47 -20....", "18.35 13.59 -19....", "17.55 13.65 -19...."] }
];

function strikeTable(name, strikes, arrows) {
  const cls = s => s === 6630 ? "at-money" : s === 6625 ? "beyond" : "";
  return `<div class="expiry strikes">
    ${arrows ? '<div class="expiry-title"><svg><use href="#tri"/></svg><svg class="flip"><use href="#tri"/></svg></div>' : ""}
    <table class="grid"><thead><tr><th>${name}</th></tr></thead>
    <tbody>${strikes.map(s => `<tr><td class="${cls(s)}">${s}</td></tr>`).join("")}</tbody></table></div>`;
}

function expiryTable(e) {
  const title = e.type
    ? `<div class="expiry-title"><span>${e.type}</span><span>${e.date}</span><span>${e.iv}</span></div>` : "";
  const body = e.rows.map((row, i) => {
    const cells = row.split(" ");
    let tds = "";
    for (let c = 0; c < 6; c++) {
      tds += `<td>${cells[c] && cells[c] !== "_" ? cells[c] : ""}</td>`;
    }
    return `<tr class="${i < e.near ? "near" : "far"}">${tds}</tr>`;
  }).join("");
  const ivch = e.scroll ? "IVC..." : "IVCh...";
  const scroll = e.scroll
    ? '<div class="scroll"><div class="scroll-head"></div><span class="chev"></span><div class="thumb"></div><span class="chev down"></span></div>' : "";
  return `<div class="expiry">${title}<div class="expiry-body"><table class="grid">
    <thead><tr><th>Mid</th><th>IV</th><th>Delta</th><th>${ivch}</th><th>Model</th><th>Pos</th></tr></thead>
    <tbody>${body}</tbody></table>${scroll}</div></div>`;
}

document.getElementById("calls").innerHTML = strikeTable("CALLS", strikesCalls, true) + calls.map(expiryTable).join("");
document.getElementById("puts").innerHTML = strikeTable("PUTS", strikesPuts, false) + puts.map(expiryTable).join("");

// ---- Risk chart ----
const X = price => 711.5 + (price - 6100) * 0.5412;
const Y = pnl => 325.3 - pnl * 0.02025;

function text(x, y, str, cls = "mid", extra = "") {
  return `<text x="${x}" y="${y + 3}" class="${cls}" ${extra}>${str}</text>`;
}

function line(x1, y1, x2, y2, color, width = 1, extra = "") {
  return `<line x1="${x1}" y1="${y1}" x2="${x2}" y2="${y2}" stroke="${color}" stroke-width="${width}" ${extra}/>`;
}

function box(x, y, w, h, fill, stroke = "none", r = 0) {
  return `<rect x="${x}" y="${y}" width="${w}" height="${h}" rx="${r}" fill="${fill}" stroke="${stroke}"/>`;
}

function smooth(pts) {
  let d = `M${pts[0]}`;
  for (let i = 0; i < pts.length - 1; i++) {
    const p0 = pts[i - 1] || pts[i], p1 = pts[i], p2 = pts[i + 1], p3 = pts[i + 2] || p2;
    d += `C${p1[0] + (p2[0] - p0[0]) / 6},${p1[1] + (p2[1] - p0[1]) / 6} ${p2[0] - (p3[0] - p1[0]) / 6},${p2[1] - (p3[1] - p1[1]) / 6} ${p2}`;
  }
  return d;
}

function vertical(x, y, str, cls) {
  return `<text class="${cls}" transform="translate(${x + 3} ${y}) rotate(-90)">${str}</text>`;
}

const expiration = [[696, 443], [800, 443], [827, 442.5], [850, 440], [867, 435], [883, 425], [897, 410], [910, 388],
  [917, 371], [924, 350], [931, 323], [940, 283], [947, 247], [952, 217], [955.5, 205.5], [960, 218], [970, 257],
  [977, 278], [985, 294], [996, 302], [1007, 295], [1015, 280], [1021, 262.500], [1023, 261], [1025, 264], [1032, 288],
  [1043, 324], [1050, 341], [1057, 352], [1070, 366], [1090, 376.500], [1110, 379.500], [1137, 380.300], [1234, 380.500]];
const today = [[696, 443], [740, 442.500], [765, 440.700], [793, 436.700], [820, 429], [847, 416.700], [873, 398],
  [900, 376.700], [933, 350], [958, 333], [977, 324.500], [998, 321], [1023, 324.500], [1043, 332.500], [1060, 340],
  [1093, 356.500], [1127, 369.500], [1153, 375], [1177, 378.500], [1200, 380], [1234, 380.500]];

let svg = "";

// probability bands
svg += box(931, 184, 100, 283, "#ddfffb");
svg += box(957, 184, 50, 283, "#b1c1dc");

// grid, price labels and percent labels
const moves = ["-7.6%", "-6.1%", "-4.6%", "-3.0%", "-1.5%", "0.0%", "1.5%", "3.0%", "4.5%", "6.1%"];
moves.forEach((m, i) => {
  const x = X(6100 + i * 100);
  svg += line(x, 184, x, 467, "rgba(215,215,220,.7)");
  svg += text(x, 175, m) + text(x, 476.5, 6100 + i * 100);
});
const percents = ["243%", "208%", "174%", "139%", "104%", "69%", "35%", "", "-35%", "-69%", "-104%", "-139%", "-174%", "-208%", "-243%"];
percents.forEach((p, i) => {
  const pnl = 7000 - i * 1000;
  svg += line(696, Y(pnl), 1236, Y(pnl), "rgba(215,215,220,.7)");
  if (p) svg += text(690, Y(pnl), p, "end") + text(1239, Y(pnl), pnl.toLocaleString("en-US"), "");
});
svg += line(696, 184, 696, 467, "#e4e4e4") + line(1233.5, 184, 1233.5, 467, "#e4e4e4");

svg += vertical(939, 217, "6509.24", "sd") + vertical(964, 217, "6554.80", "sd-in");
svg += vertical(1003, 217, "6645.90", "sd-in") + vertical(1028, 217, "6691.46", "sd");

// targets
svg += line(696, 319.3, 1234, 319.3, "#3df03d", 2);
svg += line(696, 325, 1234, 325, "#333", 1.2);
svg += line(696, 333.3, 1234, 333.3, "#d0001e", 2);
svg += box(657, 314, 35, 13, "#0f9a14", "#0a6a0c") + text(690, 322, "6%", "end white");
svg += box(657, 328, 35, 11, "#d8000e", "#8c0008") + text(690, 333.5, "-15%", "end maxloss");

// break-evens
svg += line(930.5, 184, 930.5, 467, "#8b1a8b", 1.2, 'stroke-dasharray="4 3.500"');
svg += line(1043.3, 184, 1043.3, 467, "#8b1a8b", 1.2, 'stroke-dasharray="4 3.500"');
svg += vertical(927, 465, "6504.80", "prob") + vertical(1040, 465, "6713.33", "prob");

// pnl curves
svg += `<path d="${smooth(today)}" fill="none" stroke="#dc5564" stroke-width="1.200"/>`;
svg += `<path d="${smooth(today.slice(9, 14))}" fill="none" stroke="#9aa6cc" stroke-width="1.400"/>`;
svg += `<path d="${smooth(expiration)}" fill="none" stroke="#4a46b8" stroke-width="1.500"/>`;

// current position and its trail
svg += '<ellipse cx="1001" cy="321.500" rx="12" ry="5" fill="#f0b27a" opacity=".45"/>';
svg += box(990, 330, 3, 2, "#c81e1e") + box(994, 329, 5, 2, "#c81e1e") + box(1001, 325, 2, 4, "#c81e1e");
svg += box(1005, 325, 2, 4, "#c81e1e") + box(1007, 324, 4, 2, "#c81e1e");
svg += '<path d="M999 323l5-2 4 3-3 3-4-1z" fill="#1f9a2c"/>';
svg += '<circle cx="998" cy="322" r="3.500" fill="#35e0d8" stroke="#15353c"/>';

svg += box(1187.5, 314, 86.5, 11, "#12e012", "#0a8a0a") + text(1189, 320, "Profit Target", "target");
svg += box(1195.5, 328, 78.500, 10.500, "#dc000c", "#a00008") + text(1197, 333.5, "Max Loss -432", "maxloss");
svg += box(1237.5, 316, 36.5, 12, "#0f9a14") + text(1240, 322, "172", "white");

svg += text(814, 457, "10.7%", "mid prob") + text(987, 457, "65.9%", "mid prob") + text(1139, 457, "23.4%", "mid prob");
svg += box(986.5, 169.500, 22.500, 11, "#eef1f6", "#555") + text(998, 175, "0.4%");

// legend
svg += box(700.5, 187.5, 135, 66.500, "rgba(236,242,244,.95)", "#9aa5a5", 4);
svg += box(706, 194, 3, 10, "#e0283c") + box(706, 205, 3, 43, "#86a8e4");
svg += text(709, 199, "-8,617.40 Realized PnL", "");
[["-3", "26Sep 6550 Put Δ", "-24.32", "neg", 824], ["+3", "30Sep 6545 Put Δ", "-26.32", "pos", 825],
  ["+2", "30Sep 6675 Call Δ", "38.94", "pos", 829], ["-2", "26Sep 6675 Call Δ", "35.63", "neg", 828]].forEach((l, i) => {
  const y = 210.3 + i * 11.2;
  svg += text(709, y, l[0], "") + text(l[0][0] === "+" ? 722 : 720, y, l[1], l[3]) + text(l[4], y, l[2], "end " + l[3]);
});
svg += box(700.5, 429.5, 64, 33, "rgba(228,234,248,.85)", "#8a969c", 4);
svg += text(706, 441, "9/26/2025 (0)", "date-a") + text(706, 452, "9/18/2025 (8)", "date-b");

// ---- Greeks strip ----
svg += box(655.5, 483.5, 618.5, 146, "#e8f0f4", "#7e8a90", 5);
const edges = [696.5, 739.5, 793.5, 847.5, 902, 956, 1010, 1064, 1118, 1172.5, 1234];
const greeks = [
  { name: "PnL", y: 505.7, bars: [-8, -8, -7, -5, -1, 0, 0, -3, -3, -4],
    values: ["-5862", "-5732", "-5132", "-3590", "-1417", "", "-229", "-1573", "-2462", "-2715"] },
  { name: "Delta", y: 539.3, bars: [0, 1, 4, 8, 8, 3, -4, -4, -1, 0],
    values: ["0.41", "2.77", "10.22", "20.16", "20.85", "6.21", "-11.05", "-12.77", "-4.99", "-0.92"] },
  { name: "Gamma", y: 564.7, bars: [0, 1, 4, 2, -2, -8, -4, 2, 2, 1],
    values: ["0.01", "0.04", "0.10", "0.07", "-0.07", "-0.21", "-0.11", "0.06", "0.07", "0.02"] },
  { name: "Theta", y: 590.3, bars: [0, -1, -3, -2, 4, 8, 5, 0, -1, 0],
    values: ["-8.05", "-40.19", "-92.91", "-58.26", "101.54", "212.40", "123.36", "-31.52", "-47.82", "-14.27"] },
  { name: "Vega", y: 615.5, bars: [0, 1, 4, 7, 8, 8, 7, 6, 2, 1],
    values: ["14.69", "82.07", "243.65", "404.64", "463.67", "455.18", "432.58", "352.44", "160.72", "36.63"] }
];
greeks.forEach(g => {
  svg += text(676, g.y + 1, g.name, "mid greek") + text(1256, g.y + 1, g.name, "mid greek");
  g.bars.forEach((h, i) => {
    const w = edges[i + 1] - edges[i];
    if (h > 0) svg += box(edges[i], g.y - h, w, h, "#5f74ee", "#5a62a0");
    if (h < 0) svg += box(edges[i], g.y, w, -h, "#ea6478", "#a05060");
    const v = g.values[i];
    const neg = v[0] === "-";
    svg += text(X(6100 + i * 100) + 1, g.y + (neg ? -3 : 5.5), v, neg ? "mid neg" : "mid pos");
  });
  svg += line(696.5, g.y, 1234, g.y, "#666");
});
["-203%", "-199%", "-178%", "-125%", "-49%", "", "-8%", "-55%", "-85%", "-94%"].forEach((p, i) => {
  svg += text(X(6100 + i * 100) + 1, 494, p, "mid neg");
});

// current price column
svg += box(978.5, 471.5, 38.500, 158, "rgba(236,241,248,.93)", "#5b666c", 5);
svg += text(998, 477, "6629.93");
svg += text(998.5, 503, "172", "mid now") + text(998, 515, "6.0%", "mid now") + text(998, 540.5, "0.63", "mid now");
svg += text(998, 566, "-0.20", "mid now-neg") + text(998, 591.5, "207.55", "mid now") + text(998, 617, "445.18", "mid now");

document.getElementById("risk").innerHTML = svg;
```
